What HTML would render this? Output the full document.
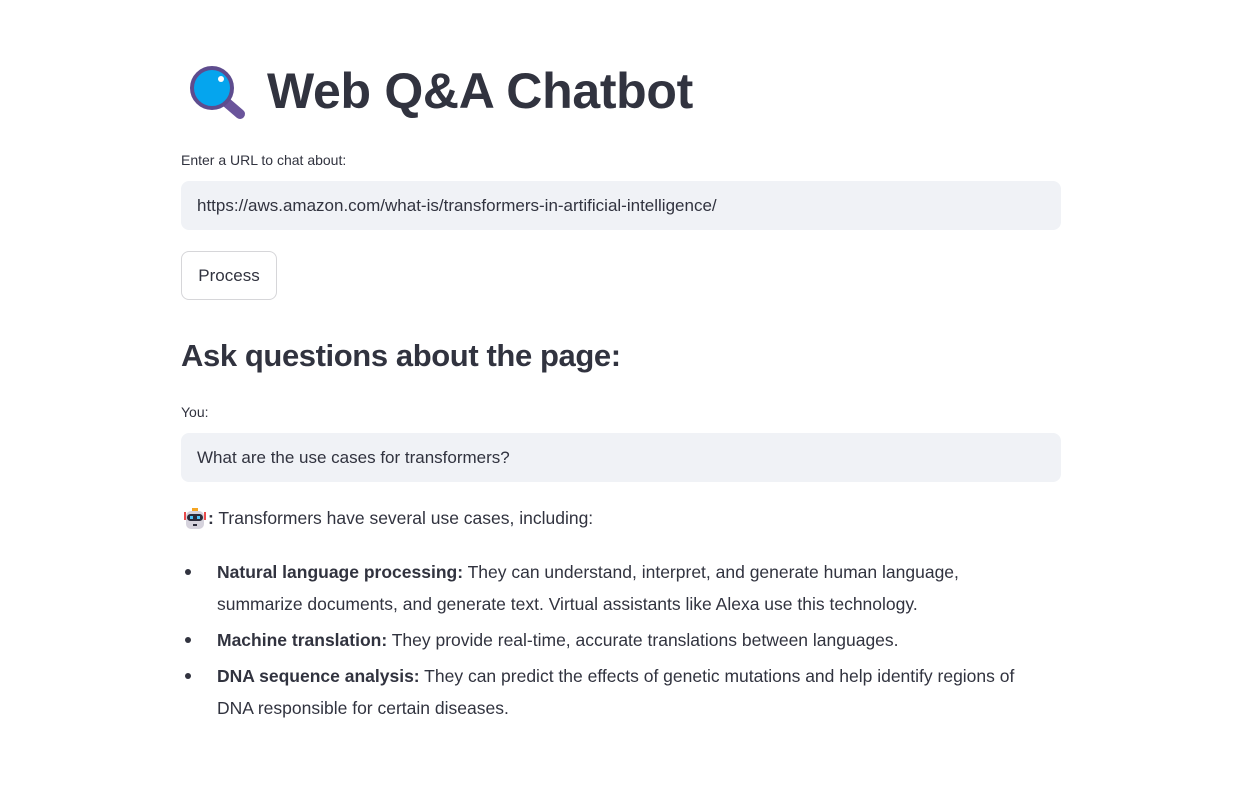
<!DOCTYPE html>
<html><head><style>
body{margin:0;background:#fff;font-family:"Liberation Sans",sans-serif;color:#31333f;}
.abs{position:absolute;}
.inp{position:absolute;left:181px;width:880px;height:49px;background:#f0f2f6;border-radius:8px;font-size:17px;line-height:49px;padding-left:16px;box-sizing:border-box;}
.lbl{position:absolute;left:181px;font-size:14px;}
ul{position:absolute;left:181px;top:556px;margin:0;padding-left:36px;width:880px;font-size:17.5px;line-height:32px;list-style:none;}
li{margin-bottom:4px;position:relative;}
li:before{content:"";position:absolute;left:-32px;top:13px;width:6px;height:6px;border-radius:50%;background:#31333f;}
</style></head><body>
<svg class="abs" style="left:188px;top:64px" width="60" height="58" viewBox="0 0 60 58">
<line x1="38" y1="38" x2="52" y2="50" stroke="#6a549b" stroke-width="10" stroke-linecap="round"/>
<circle cx="24" cy="24" r="20" fill="#05a5ee" stroke="#5e4c8e" stroke-width="4"/>
<ellipse cx="33" cy="15" rx="3" ry="3" fill="#fff"/>
</svg>
<div class="abs" style="left:267px;top:62px;font-size:50px;font-weight:bold;letter-spacing:-0.3px">Web Q&amp;A Chatbot</div>
<div class="lbl" style="top:152px">Enter a URL to chat about:</div>
<div class="inp" style="top:181px">https://aws.amazon.com/what-is/transformers-in-artificial-intelligence/</div>
<div class="abs" style="left:181px;top:251px;width:96px;height:49px;border:1px solid #d6d6d9;border-radius:8px;box-sizing:border-box;font-size:17px;line-height:47px;text-align:center">Process</div>
<div class="abs" style="left:181px;top:338px;font-size:31px;font-weight:bold;letter-spacing:-0.4px">Ask questions about the page:</div>
<div class="lbl" style="top:404px">You:</div>
<div class="inp" style="top:433px">What are the use cases for transformers?</div>
<svg class="abs" style="left:183px;top:507px" width="24" height="24" viewBox="0 0 24 24">
<rect x="1" y="5" width="2" height="8" fill="#e94b4b"/><rect x="21" y="5" width="2" height="8" fill="#e94b4b"/>
<rect x="9" y="1" width="6" height="3" fill="#f5a623"/>
<rect x="3" y="4" width="18" height="18" rx="5" fill="#d5d2dc"/>
<rect x="4" y="7" width="16" height="7" rx="3.5" fill="#2b2b3a"/>
<rect x="7" y="9" width="3" height="3" fill="#4fc3f7"/><rect x="14" y="9" width="3" height="3" fill="#4fc3f7"/>
<rect x="10" y="17" width="4" height="2" fill="#2b2b3a"/>
</svg>
<div class="abs" style="left:208px;top:508px;font-size:17.5px"><b>:</b> Transformers have several use cases, including:</div>
<ul>
<li><b>Natural language processing:</b> They can understand, interpret, and generate human language,<br>summarize documents, and generate text. Virtual assistants like Alexa use this technology.</li>
<li><b>Machine translation:</b> They provide real-time, accurate translations between languages.</li>
<li><b>DNA sequence analysis:</b> They can predict the effects of genetic mutations and help identify regions of<br>DNA responsible for certain diseases.</li>
</ul>
</body></html>
